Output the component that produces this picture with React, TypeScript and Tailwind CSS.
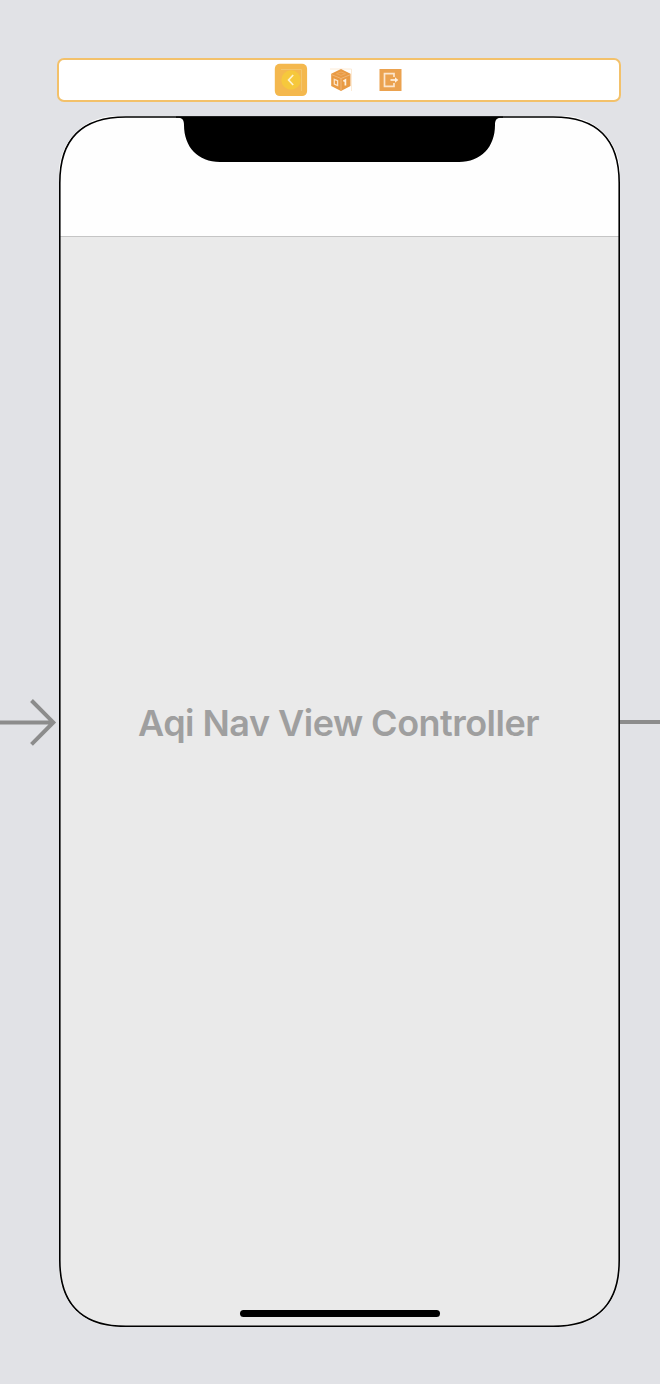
function ControllerIcon() {
  return (
    <svg className="h-[34px] w-[34px]" viewBox="0 0 34 34" fill="none">
      <rect x="0.8" y="0.8" width="32.3" height="32.300" rx="5" fill="#f4b84e" />
      <path d="M7 6.500H27.500V28" stroke="#f3c66e" strokeWidth="1" />
      <circle cx="17" cy="17" r="9.700" fill="#f6c83c" />
      <path d="M19.200 12L14.600 17L19.200 22" stroke="#fff3cf" strokeWidth="1.700" />
    </svg>
  );
}

function ResponderIcon() {
  return (
    <svg className="h-[24px] w-[24px]" viewBox="0 0 24 24" fill="none">
      <path d="M1 1H22.500V23" stroke="#fcebd6" strokeWidth="1" />
      <path d="M12 1L21.500 5.700V18L12 23L2.200 18V5.700Z" fill="#e99a43" />
      <path d="M3 6.800L12 10.500L21 6.800M12 10.500V22" stroke="#f0b678" strokeWidth="1" />
      <path d="M7.500 5.700L12 4L16.500 5.700L12 7.300Z" stroke="#efb06b" strokeWidth="0.800" />
      <path d="M5.300 11.300L8.600 12.700V17.500L5.300 16Z" stroke="#fbe3c8" strokeWidth="1.300" />
      <path d="M14.400 13.200L16.400 12V17.500" stroke="#fff1df" strokeWidth="1.700" />
    </svg>
  );
}

function ExitIcon() {
  return (
    <svg className="h-[24px] w-[24px]" viewBox="0 0 24 24" fill="none">
      <rect x="1.500" y="1" width="22" height="22" fill="#eba24f" />
      <path d="M16 9V5.700H6.500V18.300H16V15" stroke="#fce6cd" strokeWidth="1.700" />
      <path d="M12.500 12H18" stroke="#fff0df" strokeWidth="1.700" />
      <path d="M17 9.200L20.300 12L17 14.800Z" fill="#fff0df" />
    </svg>
  );
}

function DeviceOutline() {
  return (
    <svg className="pointer-events-none absolute inset-0 h-full w-full" viewBox="0 0 561 1211" fill="none">
      <path d="M117 0.500H444V1.800H441C437.500 2.200 436 4.500 436 9C436 31 422 46 400 46H161C139 46 125 31 125 9C125 4.500 123.500 2.200 120 1.800H117Z" fill="#000" />
      <path
        d="M66.800 1H494.200C538.400 1 560.200 22.800 560.200 67V1144.300C560.200 1188.500 538.400 1210.300 494.200 1210.300H66.800C22.600 1210.300 0.800 1188.500 0.800 1144.300V67C0.800 22.800 22.600 1 66.800 1Z"
        stroke="#000"
        strokeWidth="1.600"
      />
    </svg>
  );
}

export default function App() {
  return (
    <main className="flex h-[1384px] w-[660px] flex-col overflow-hidden bg-[#e1e2e6] pt-[58px] font-['Inter',sans-serif]">
      <header className="ml-[57px] flex h-[44px] w-[564px] items-center justify-center rounded-[7px] border-2 border-[#f3c16a] bg-white">
        <div className="flex items-center pr-[3px]">
          <ControllerIcon />
          <div className="ml-[21px]"><ResponderIcon /></div>
          <div className="ml-[25px]"><ExitIcon /></div>
        </div>
      </header>
      <div className="mt-[14px] flex h-[1211px]">
        <div className="w-[59px] shrink-0 pt-[580px]">
          <svg className="h-[52px] w-[59px]" viewBox="0 0 59 52" fill="none" stroke="#8c8c8c" strokeWidth="4">
            <path d="M0 26.400H53M31.500 4.500L53.300 26.400L31.500 48.300" />
          </svg>
        </div>
        <section className="relative flex w-[561px] shrink-0 flex-col overflow-hidden rounded-[57px] bg-[#eaeaea]">
          <div className="h-[121px] shrink-0 border-b border-[#c5c5c5] bg-[#fefefe]" />
          <div className="flex flex-1 flex-col items-center">
            <h1 className="mt-[458px] h-[56px] pr-[2px] whitespace-nowrap text-[36px] leading-[56px] font-semibold tracking-[-0.52px] text-[#9f9f9f]">
              Aqi Nav View Controller
            </h1>
            <div className="mt-auto mb-[10px] h-[7px] w-[200px] rounded-full bg-black" />
          </div>
          <DeviceOutline />
        </section>
        <div className="w-[40px] pt-[604px]">
          <div className="h-[4px] bg-[#8c8c8c]" />
        </div>
      </div>
    </main>
  );
}
